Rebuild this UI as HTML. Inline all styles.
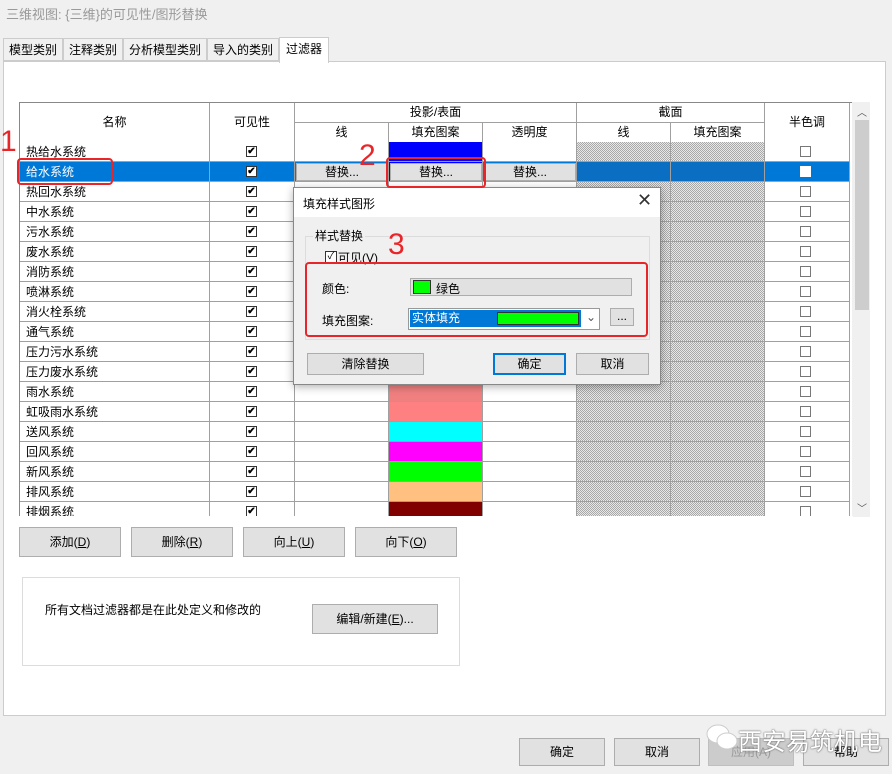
<!DOCTYPE html><html><head><meta charset="utf-8"><style>
*{box-sizing:border-box;margin:0;padding:0}
body{width:892px;height:774px;background:#f0f0f0;font-family:"Liberation Sans","Noto Sans CJK SC",sans-serif;font-size:12px;color:#000;position:relative;overflow:hidden}
.a{position:absolute}
.btn{position:absolute;background:#e1e1e1;border:1px solid #adadad;text-align:center;font-size:12px}
.cell{position:absolute;border-right:1px solid #a0a0a0;border-bottom:1px solid #a0a0a0;height:20px}
.hatch{background:repeating-conic-gradient(#a8a8a8 0 25%,#e8e8e8 0 50%) 0 0/2px 2px}
.cb{position:absolute;width:11px;height:11px;border:1px solid #333;background:#fff;font-size:10px;line-height:9px;text-align:center;font-weight:bold}
.cb0{position:absolute;width:11px;height:11px;border:1px solid #777;background:#fff}
.red{position:absolute;color:#e8262a;font-size:30px;font-family:"Liberation Sans",sans-serif}
.rbox{position:absolute;border:2px solid #e8262a;border-radius:4px}
.hd{position:absolute;background:#fff;border-right:1px solid #a0a0a0;border-bottom:1px solid #a0a0a0;text-align:center}
</style></head><body>
<div class="a" style="left:6px;top:4px;color:#999;font-size:13px">三维视图: {三维}的可见性/图形替换</div>
<div class="a" style="left:3px;top:38px;width:60px;height:23px;border:1px solid #ccc;background:#f0f0f0;text-align:center;line-height:22px">模型类别</div>
<div class="a" style="left:63px;top:38px;width:60px;height:23px;border:1px solid #ccc;background:#f0f0f0;text-align:center;line-height:22px">注释类别</div>
<div class="a" style="left:123px;top:38px;width:84px;height:23px;border:1px solid #ccc;background:#f0f0f0;text-align:center;line-height:22px">分析模型类别</div>
<div class="a" style="left:207px;top:38px;width:72px;height:23px;border:1px solid #ccc;background:#f0f0f0;text-align:center;line-height:22px">导入的类别</div>
<div class="a" style="left:279px;top:37px;width:50px;height:26px;border:1px solid #ccc;border-bottom:none;background:#fff;text-align:center;line-height:22px;z-index:2">过滤器</div>
<div class="a" style="left:3px;top:61px;width:883px;height:655px;background:#fff;border:1px solid #ccc"></div>

<!-- table -->
<div class="a" style="left:19px;top:102px;width:836px;height:415px;border-left:1px solid #888;border-top:1px solid #888;overflow:hidden;background:#fff" id="t">
<div class="hd" style="left:0;top:0;width:190px;height:40px;line-height:38px">名称</div>
<div class="hd" style="left:190px;top:0;width:85px;height:40px;line-height:38px">可见性</div>
<div class="hd" style="left:275px;top:0;width:282px;height:20px;line-height:19px">投影/表面</div>
<div class="hd" style="left:275px;top:20px;width:94px;height:20px;line-height:19px">线</div>
<div class="hd" style="left:369px;top:20px;width:94px;height:20px;line-height:19px">填充图案</div>
<div class="hd" style="left:463px;top:20px;width:94px;height:20px;line-height:19px">透明度</div>
<div class="hd" style="left:557px;top:0;width:188px;height:20px;line-height:19px">截面</div>
<div class="hd" style="left:557px;top:20px;width:94px;height:20px;line-height:19px">线</div>
<div class="hd" style="left:651px;top:20px;width:94px;height:20px;line-height:19px">填充图案</div>
<div class="hd" style="left:745px;top:0;width:85px;height:40px;line-height:38px">半色调</div>
<div class="a" style="left:830px;top:0;width:6px;height:415px;background:#fff"></div>
</div>
<div class="a" style="left:852px;top:102px;width:18px;height:415px;background:#f0f0f0"></div>
<div class="a" style="left:855px;top:120px;width:14px;height:190px;background:#cdcdcd"></div>
<div class="a" style="left:857px;top:104px;font-size:10px;color:#555">︿</div>
<div class="a" style="left:857px;top:500px;font-size:10px;color:#555">﹀</div>

<div id="rows"></div>
<script>
var names=["热给水系统","给水系统","热回水系统","中水系统","污水系统","废水系统","消防系统","喷淋系统","消火栓系统","通气系统","压力污水系统","压力废水系统","雨水系统","虹吸雨水系统","送风系统","回风系统","新风系统","排风系统","排烟系统"];
var fills={0:"#0000ff",1:"#0000ff",12:"#f08080",13:"#ff8080",14:"#00ffff",15:"#ff00ff",16:"#00ff00",17:"#ffc080",18:"#800000"};
var h="";
for(var i=0;i<names.length;i++){
 var y=122+20*i; var sel=i==1; var bg=sel?"#0078d7":"#fff";
 var hgt=Math.min(20,516-y-(-20)); 
 h+='<div class="cell" style="left:20px;top:'+(y+20)+'px;width:190px;background:'+bg+';color:'+(sel?"#fff":"#000")+';padding-left:6px;line-height:20px">'+names[i]+'</div>';
 h+='<div class="cell" style="left:210px;top:'+(y+20)+'px;width:85px;background:'+bg+'"><div class="cb" style="left:36px;top:4px">✔</div></div>';
 h+='<div class="cell" style="left:295px;top:'+(y+20)+'px;width:94px;background:'+bg+'"></div>';
 h+='<div class="cell" style="left:389px;top:'+(y+20)+'px;width:94px;background:'+(fills[i]||"#fff")+'"></div>';
 h+='<div class="cell" style="left:483px;top:'+(y+20)+'px;width:94px;background:'+bg+'"></div>';
 h+='<div class="cell '+(sel?'':'hatch')+'" style="left:577px;top:'+(y+20)+'px;width:94px;'+(sel?'background:#0a6fc2':'')+'"></div>';
 h+='<div class="cell '+(sel?'':'hatch')+'" style="left:671px;top:'+(y+20)+'px;width:94px;'+(sel?'background:#0a6fc2':'')+'"></div>';
 h+='<div class="cell" style="left:765px;top:'+(y+20)+'px;width:85px;background:'+bg+'"><div class="cb0" style="left:35px;top:4px;'+(sel?'border-color:#fff':'')+'"></div></div>';
}
h+='<div class="a" style="left:19px;top:516px;width:834px;height:12px;background:#fff"></div>';
document.getElementById("rows").innerHTML=h;
</script>
<div class="btn" style="left:296px;top:163px;width:92px;height:18px;line-height:16px">替换...</div>
<div class="btn" style="left:390px;top:163px;width:92px;height:18px;line-height:16px">替换...</div>
<div class="btn" style="left:484px;top:163px;width:92px;height:18px;line-height:16px">替换...</div>

<div class="btn" style="left:19px;top:527px;width:102px;height:30px;line-height:28px">添加(<u>D</u>)</div>
<div class="btn" style="left:131px;top:527px;width:102px;height:30px;line-height:28px">删除(<u>R</u>)</div>
<div class="btn" style="left:243px;top:527px;width:102px;height:30px;line-height:28px">向上(<u>U</u>)</div>
<div class="btn" style="left:355px;top:527px;width:102px;height:30px;line-height:28px">向下(<u>O</u>)</div>
<div class="a" style="left:22px;top:577px;width:438px;height:89px;border:1px solid #dcdcdc"></div>
<div class="a" style="left:45px;top:601px">所有文档过滤器都是在此处定义和修改的</div>
<div class="btn" style="left:312px;top:604px;width:126px;height:30px;line-height:28px">编辑/新建(<u>E</u>)...</div>

<div class="btn" style="left:519px;top:738px;width:86px;height:28px;line-height:26px">确定</div>
<div class="btn" style="left:614px;top:738px;width:86px;height:28px;line-height:26px">取消</div>
<div class="btn" style="left:708px;top:738px;width:86px;height:28px;line-height:26px;color:#999;background:#ccc;border-color:#bfbfbf">应用(A)</div>
<div class="btn" style="left:803px;top:738px;width:86px;height:28px;line-height:26px">帮助</div>
<div class="a" style="left:705px;top:722px;width:34px;height:30px">
<svg width="34" height="30"><ellipse cx="13" cy="12" rx="11" ry="9" fill="#fff" stroke="#ccc"/><ellipse cx="22" cy="19" rx="10" ry="8" fill="#fff" stroke="#ccc"/></svg></div>
<div class="a" style="left:738px;top:722px;font-size:24px;color:#fff;text-shadow:0 0 2px #777,0 0 1px #555">西安易筑机电</div>

<!-- dialog -->
<div class="a" style="left:293px;top:187px;width:368px;height:198px;background:#f0f0f0;border:1px solid #888;box-shadow:0 2px 8px rgba(0,0,0,.3)">
<div class="a" style="left:0;top:0;width:366px;height:29px;background:#fff"></div>
<div class="a" style="left:9px;top:7px">填充样式图形</div>
<div class="a" style="left:343px;top:2px;font-size:18px;color:#333">✕</div>
<div class="a" style="left:11px;top:48px;width:345px;height:104px;border:1px solid #dcdcdc"></div>
<div class="a" style="left:19px;top:39px;background:#f0f0f0;padding:0 2px">样式替换</div>
<div class="a" style="left:31px;top:63px;width:12px;height:12px;border:1px solid #333;background:#fff;font-size:10px;line-height:10px;text-align:center">✓</div>
<div class="a" style="left:44px;top:61px">可见(<u>V</u>)</div>
<div class="a" style="left:28px;top:92px">颜色:</div>
<div class="a" style="left:116px;top:90px;width:222px;height:18px;border:1px solid #adadad;background:#e1e1e1"></div>
<div class="a" style="left:119px;top:92px;width:18px;height:14px;background:#00ff00;border:1px solid #333"></div>
<div class="a" style="left:142px;top:92px">绿色</div>
<div class="a" style="left:28px;top:124px">填充图案:</div>
<div class="a" style="left:114px;top:120px;width:192px;height:22px;border:1px solid #999;background:#fff"></div>
<div class="a" style="left:116px;top:122px;width:171px;height:17px;background:#0078d7;color:#fff;padding-left:2px;line-height:17px">实体填充</div>
<div class="a" style="left:203px;top:124px;width:82px;height:13px;background:#00ff00;border:1px solid #333"></div>
<div class="a" style="left:292px;top:122px;color:#555">⌄</div>
<div class="btn" style="left:316px;top:120px;width:24px;height:18px;line-height:14px">...</div>
<div class="btn" style="left:13px;top:165px;width:117px;height:22px;line-height:20px">清除替换</div>
<div class="btn" style="left:199px;top:165px;width:73px;height:22px;line-height:18px;border:2px solid #0078d7">确定</div>
<div class="btn" style="left:282px;top:165px;width:73px;height:22px;line-height:20px">取消</div>
</div>

<!-- annotations -->
<div class="red" style="left:0;top:125px">1</div>
<div class="rbox" style="left:17px;top:158px;width:96px;height:27px"></div>
<div class="red" style="left:359px;top:139px">2</div>
<div class="rbox" style="left:386px;top:157px;width:100px;height:31px"></div>
<div class="red" style="left:388px;top:228px">3</div>
<div class="rbox" style="left:305px;top:262px;width:343px;height:75px"></div>
</body></html>
